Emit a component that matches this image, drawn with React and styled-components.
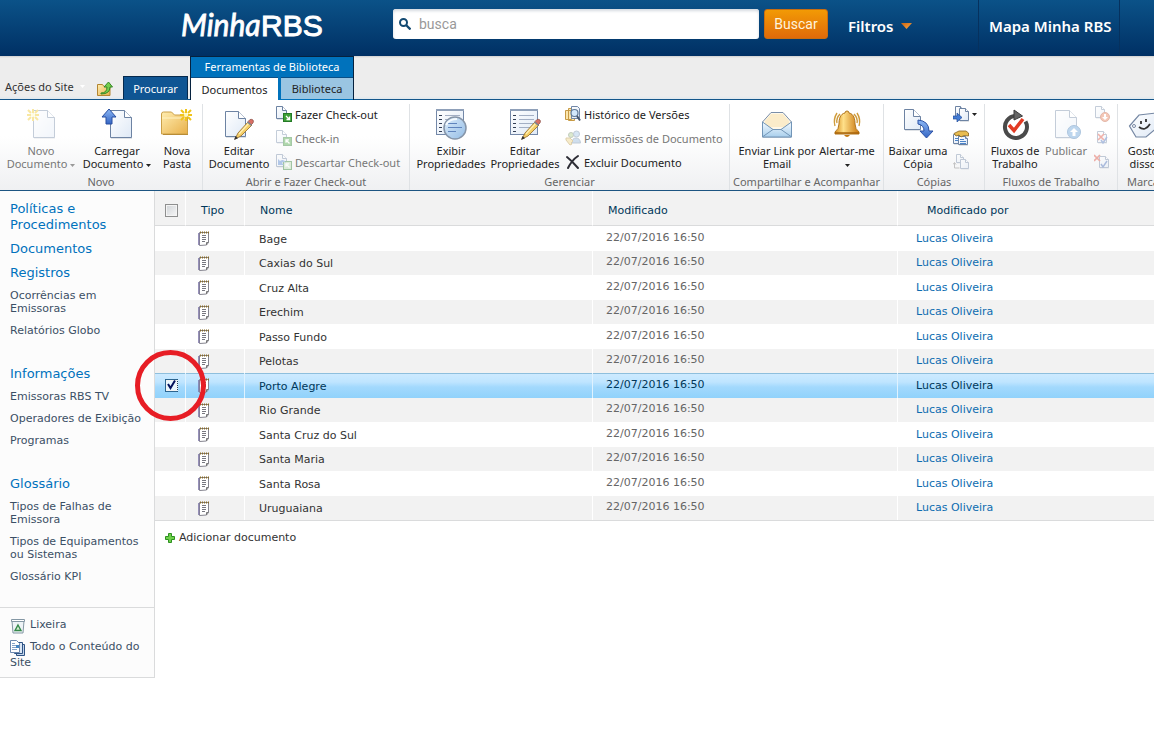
import React from "react";
import styled, { createGlobalStyle, css } from "styled-components";

const GlobalStyle = createGlobalStyle`
  * { box-sizing: border-box; }
  body { margin: 0; background: #fff; font-family: "DejaVu Sans", Verdana, sans-serif; font-size: 11px; overflow-x: hidden; }
  a { color: inherit; text-decoration: none; }
  button { font: inherit; color: inherit; border: 0; background: none; padding: 0; margin: 0; cursor: pointer; }
  svg { display: block; flex: none; }
`;

const uiFont = css`font-family: "Noto Sans", "Open Sans", sans-serif;`;

/* ---------- top bar ---------- */
const TopBar = styled.header`
  ${uiFont}
  display: flex;
  height: 56px;
  padding-left: 178px;
  overflow: hidden;
  background: linear-gradient(#0b5288, #003064);
`;
const LogoLink = styled.a`
  width: 215px;
  flex: none;
`;
const SearchForm = styled.form`
  display: flex;
  gap: 5px;
  flex: 0 1 435px;
  min-width: 200px;
  padding-top: 9px;
`;
const SearchBox = styled.label`
  display: flex;
  align-items: center;
  gap: 8px;
  flex: 1;
  min-width: 0;
  height: 30px;
  padding-left: 6px;
  border-radius: 3px;
  background: #fff;
  box-shadow: inset 0 2px 3px #d5dae0;
`;
const SearchInput = styled.input`
  flex: 1;
  min-width: 0;
  border: 0;
  outline: 0;
  padding: 0;
  background: none;
  font-family: Roboto, sans-serif;
  font-size: 14px;
  color: #555;
  &::placeholder { color: #999; opacity: 1; }
`;
const SearchButton = styled.button`
  width: 64px;
  height: 30px;
  border: 1px solid #c96d10;
  border-radius: 3px;
  background: linear-gradient(#f29a05, #e06a0a);
  color: #fff3dc;
  font-family: Roboto, sans-serif;
  font-size: 14px;
`;
const TopLink = styled.a`
  display: flex;
  align-items: center;
  gap: 7px;
  height: 52px;
  color: #fff;
  font-size: 15px;
  font-weight: 600;
  white-space: nowrap;
`;
const FilterSlot = styled.div`
  flex: none;
  width: 150px;
  padding-left: 20px;
`;
const MapSlot = styled.div`
  flex: none;
  width: 142px;
  padding-left: 10px;
  border-left: 1px solid #06315e;
  border-right: 1px solid #06315e;
`;

/* ---------- tabs ---------- */
const TabBar = styled.nav`
  ${uiFont}
  display: flex;
  align-items: flex-end;
  height: 44px;
  background: linear-gradient(#cfcfcf, #ededed 2px, #ededed 40px, #dfe8ee);
  border-bottom: 1px solid #14568a;
`;
const SiteActions = styled.button`
  display: flex;
  align-items: center;
  gap: 6px;
  height: 25px;
  padding: 0 0 0 5px;
  width: 97px;
  color: #333;
  white-space: nowrap;
`;
const UpButton = styled.button`
  width: 26px;
  height: 20px;
`;
const Tab = styled.button`
  height: 23px;
  border: 1px solid #05294d;
  border-bottom: 0;
  background: #0f5593;
  color: #fff;
  width: 65px;
`;
const ContextGroup = styled.div`
  width: 164px;
  height: 44px;
  margin: 0 0 -1px 2px;
  border: 1px solid #06223f;
  border-bottom: 0;
  background: #0072bc;
`;
const ContextTitle = styled.div`
  height: 20px;
  line-height: 20px;
  text-align: center;
  color: #fff;
`;
const ContextTabs = styled.div`
  display: flex;
  gap: 3px;
`;
const ContextTab = styled.button`
  width: ${(p) => (p.$active ? 87 : 72)}px;
  height: ${(p) => (p.$active ? 23 : 22)}px;
  border-top: 1px solid #0a4f86;
  background: ${(p) => (p.$active ? "#fff" : "#9ac5e2")};
  color: #222;
`;

/* ---------- ribbon ---------- */
const Ribbon = styled.div`
  ${uiFont}
  display: flex;
  height: 91px;
  overflow: hidden;
  background: linear-gradient(#fff 40%, #eff0f2);
  border-bottom: 1px solid #1d5582;
`;
const Group = styled.section`
  display: flex;
  flex-direction: column;
  flex: none;
  width: ${(p) => p.$w}px;
  margin: 4px 0 0;
  border-right: 1px solid #dfe2e5;
`;
const GroupBody = styled.div`
  display: flex;
  height: 70px;
  padding-left: ${(p) => p.$pad || 4}px;
`;
const GroupTitle = styled.div`
  line-height: 15px;
  text-align: center;
  color: #666;
  white-space: nowrap;
`;
const BigButton = styled.button`
  display: flex;
  flex-direction: column;
  align-items: center;
  flex: none;
  width: ${(p) => p.$w}px;
  padding-top: 4px;
  color: ${(p) => (p.disabled ? "#777" : "#222")};
  line-height: 13px;
  white-space: nowrap;
  & > svg { margin-bottom: 4px; opacity: ${(p) => (p.disabled ? 0.4 : 1)}; }
`;
const Caption = styled.span`
  display: flex;
  align-items: center;
  gap: 3px;
  min-height: 13px;
  & > svg { margin-top: 4px; }
`;
const SmallColumn = styled.div`
  display: flex;
  flex-direction: column;
  padding-left: ${(p) => p.$pad || 4}px;
`;
const SmallButton = styled.button`
  display: flex;
  align-items: center;
  gap: 3px;
  flex: none;
  height: 24px;
  padding-bottom: 4px;
  color: ${(p) => (p.disabled ? "#777" : "#222")};
  white-space: nowrap;
  & > svg:first-child { opacity: ${(p) => (p.disabled ? 0.4 : 1)}; }
`;

/* ---------- body ---------- */
const Body = styled.div`
  display: flex;
  align-items: flex-start;
`;
const Sidebar = styled.aside`
  flex: none;
  width: 155px;
  padding-top: 10px;
  background: #fcfcfc;
  border-right: 1px solid #dadbdc;
  border-bottom: 1px solid #dadbdc;
  color: #3b4f65;
`;
const NavSection = styled.nav`
  padding: 0 4px 0 10px;
  margin-bottom: ${(p) => (p.$last ? 15 : 20)}px;
  display: flow-root;
`;
const NavHeading = styled.a`
  display: block;
  margin-bottom: 8px;
  font-size: 13px;
  line-height: 16px;
  color: #0072bc;
`;
const NavItem = styled.a`
  display: block;
  margin-bottom: 9px;
  line-height: 13px;
`;
const SideFooter = styled.div`
  padding: 9px 4px 6px 10px;
  border-top: 1px solid #dadbdc;
`;
const FooterItem = styled.a`
  display: block;
  margin-bottom: 6px;
  line-height: 16px;
  & > svg { display: inline-block; vertical-align: -3px; margin: -3px 4px -3px 0; }
  &:last-child { margin-bottom: 0; }
`;
const Main = styled.main`
  flex: 1;
  min-width: 0;
`;
const ListTable = styled.table`
  width: 100%;
  table-layout: fixed;
  border-collapse: separate;
  border-spacing: 0;
  border-bottom: 1px solid #dadbdc;
  color: #333;
`;
const HeadCell = styled.th`
  width: ${(p) => (p.$w ? p.$w + "px" : "auto")};
  height: 35px;
  padding: 4px 0 0 ${(p) => p.$pad}px;
  background: #f2f2f2;
  border-right: 1px solid #fff;
  border-bottom: 1px solid #dadbdc;
  font-weight: normal;
  text-align: left;
  color: #003759;
  &:last-child { border-right: 0; }
`;
const Row = styled.tr`
  height: 25px;
  background: #fff;
  &:nth-child(even) { height: 24px; background: #f2f2f2; }
  ${(p) => p.$selected && css`
    && { background: linear-gradient(#8ebfdd 1px, #cdeaff 1px, #bfe5ff 9px, #a3d9fd 14px, #91d2fb); color: #003759; }
  `}
`;
const Cell = styled.td`
  position: relative;
  padding: ${(p) => (p.$lowered ? 2 : 0)}px 0 ${(p) => (p.$raised ? 2 : 0)}px ${(p) => p.$pad}px;
  border-right: 1px solid ${(p) => (p.$selected ? "#dff2ff" : "#fff")};
  line-height: 16px;
  color: ${(p) => (p.$raised && !p.$selected ? "#666" : "inherit")};
  &:last-child { border-right: 0; }
`;
const UserLink = styled.a`
  color: ${(p) => (p.$selected ? "#003759" : "#0d6cb0")};
`;
const Check = styled.input`
  appearance: none;
  display: block;
  width: 13px;
  height: 13px;
  margin: 0;
  border: 1px solid #8e8f8f;
  background: linear-gradient(135deg, #cfd3d6, #f7f7f7);
  box-shadow: inset 0 0 0 1px #f4f4f4;
  opacity: ${(p) => (p.$hidden ? 0 : 1)};
  ${(p) => p.$marked && css`
    border: 1px solid #2c6590;
    border-right: 1px dotted #24425a;
    background: #e9f7ff;
  `}
`;
const TickMark = styled.svg`
  position: absolute;
  left: 10px;
  top: 5px;
  pointer-events: none;
`;
const Ring = styled.span`
  position: absolute;
  z-index: 2;
  left: -20px;
  top: -23px;
  width: 71px;
  height: 71px;
  border: 5px solid #e71d25;
  border-radius: 50%;
  pointer-events: none;
`;
const AddLink = styled.a`
  display: inline-flex;
  align-items: center;
  gap: 4px;
  padding: 9px 10px;
  line-height: 16px;
  color: #333;
`;

/* ---------- icons ---------- */
const Svg = ({ s = 32, children, ...rest }) => (
  <svg width={s} height={s} viewBox={`0 0 ${s} ${s}`} fill="none" aria-hidden="true" {...rest}>{children}</svg>
);
const HiddenSvg = styled.svg`
  position: absolute;
`;
const Defs = () => (
  <HiddenSvg width="0" height="0" aria-hidden="true">
    <defs>
      <linearGradient id="paper" x1="0" y1="0" x2="1" y2="1"><stop stopColor="#fff" /><stop offset="1" stopColor="#dfe9f6" /></linearGradient>
      <linearGradient id="gold" x1="0" y1="0" x2="1" y2="1"><stop stopColor="#ffedb0" /><stop offset="1" stopColor="#e8b04a" /></linearGradient>
      <linearGradient id="bell" x1="0" x2="1" y1="0" y2="0"><stop stopColor="#d58b1b" /><stop offset=".35" stopColor="#ffe08a" /><stop offset="1" stopColor="#c8750d" /></linearGradient>
      <linearGradient id="blue" x1="0" y1="0" x2="0" y2="1"><stop stopColor="#8db8f5" /><stop offset="1" stopColor="#3465c4" /></linearGradient>
      <linearGradient id="sky" x1="0" y1="0" x2="0" y2="1"><stop stopColor="#f4faff" /><stop offset="1" stopColor="#a9cfec" /></linearGradient>
      <linearGradient id="lens" x1="0" y1="0" x2="1" y2="1"><stop stopColor="#dcecfa" /><stop offset="1" stopColor="#94bde6" /></linearGradient>
      <linearGradient id="orange" x1="0" y1="0" x2="1" y2="1"><stop stopColor="#c96310" /><stop offset="1" stopColor="#ffab45" /></linearGradient>
    </defs>
  </HiddenSvg>
);
const Sheet = ({ x = 8, y = 2, w = 21, h = 28, f = 7 }) => (
  <g>
    <path d={`M${x + 1} ${y + 1}h${w - f}l${f} ${f}v${h - f}h${-w}z`} fill="#c9ced6" opacity=".6" />
    <path d={`M${x + 0.5} ${y + 0.5}h${w - f}l${f} ${f}v${h - f - 1}h${-w}z`} fill="url(#paper)" stroke="#6d83a3" />
    <path d={`M${x + w - f + 0.5} ${y + 0.5}v${f}h${f}`} fill="#fff" stroke="#6d83a3" />
  </g>
);
const Burst = ({ x, y }) => (
  <g transform={`translate(${x} ${y})`}>
    <path d="M0-6v4M0 2v4M-6 0h4M2 0h4M-5-5l3 3M5-5L2-2M-5 5l3-3M5 5L2 2" stroke="#f0c419" strokeWidth="2" />
    <circle r="2" fill="#fff8b8" />
  </g>
);
const Pencil = ({ x, y }) => (
  <g transform={`translate(${x} ${y})`}>
    <path d="M1 20l3-6L14 3l4 3L7 17z" fill="#f5cf67" stroke="#9c7434" strokeWidth=".9" />
    <path d="M5 15L15 4" stroke="#fff0b5" strokeWidth="1.200" />
    <path d="M14 2.500l2-2q2-.5 3 .5t0 3l-2 2z" fill="#d96f65" stroke="#8a5148" strokeWidth=".7" />
    <path d="M13.500 3l4 3.500" stroke="#7c8794" strokeWidth="1.500" />
    <path d="M0 21l1.500-4 2.500 2.200z" fill="#333" />
  </g>
);
const FormSheet = () => (
  <g>
    <rect x="1.500" y="1.500" width="27" height="25" fill="url(#paper)" stroke="#7488a8" />
    <path d="M1 2h28" stroke="#8fa0b9" strokeWidth="2" />
    <path d="M4 7.500h3M4 11.500h3M4 15.500h3M4 19.500h3M4 23.500h3" stroke="#333f55" />
    <path d="M10 7.500h15M10 11.500h15M10 15.500h15M10 19.500h15" stroke="#a3afc4" />
  </g>
);
const NewDoc = () => <Svg><Sheet x={8} /><Burst x={8} y={7} /></Svg>;
const Upload = () => (
  <Svg><Sheet x={9} /><path d="M8 1l7 8h-4v7H5V9H1z" fill="url(#blue)" stroke="#294fa0" /></Svg>
);
const NewFolder = () => (
  <Svg>
    <path d="M.5 26V6q0-2 2-2h8l3 3h11q2 0 2 2v17z" fill="url(#gold)" stroke="#cba048" />
    <path d="M1 10h25" stroke="#fff3c4" /><path d="M2 26.500h25" stroke="#b88c37" />
    <Burst x={25} y={7} />
  </Svg>
);
const EditDoc = () => <Svg><Sheet x={2} y={3} w={20} h={26} /><Pencil x={11} y={11} /></Svg>;
const ViewProps = () => (
  <Svg><FormSheet /><circle cx="20" cy="20" r="11" fill="url(#lens)" stroke="#8695a8" strokeWidth="1.500" />
    <path d="M12 15.500h10M13 19.500h14M13 23.500h8" stroke="#5f84bd" /><path d="M11 17q3-6 11-6" stroke="#f4faff" strokeWidth="2" /></Svg>
);
const EditProps = () => <Svg><FormSheet /><Pencil x={12} y={11} /></Svg>;
const Mail = () => (
  <Svg>
    <path d="M1.500 14L10 4.500h12L30.500 14v15h-29z" fill="#fff8e8" stroke="#7a8ea8" />
    <path d="M4 13L10 6h12l6 7v6H4z" fill="#fbecca" />
    <path d="M1.500 14L12 21.500h8L30.500 14v15h-29z" fill="url(#sky)" stroke="#7295b7" />
    <path d="M2 28.500l10-7M30 28.500l-10-7" stroke="#7295b7" />
  </Svg>
);
const Bell = () => (
  <Svg>
    <path d="M6 5q-4 6-2 13M9 6q-4 4-3 9M26 5q4 6 2 13M23 6q4 4 3 9" stroke="#cf9c3c" strokeWidth="1.400" />
    <path d="M16 3q2 0 2 2c5 1 6 6 6 11q0 5 4 8v2H4v-2q4-3 4-8c0-5 1-10 6-11q0-2 2-2z" fill="url(#bell)" stroke="#b1751a" />
    <path d="M4 25h24" stroke="#a9650c" strokeWidth="1.500" /><path d="M13 27q3 4 6 0z" fill="#c5780e" />
  </Svg>
);
const Download = () => (
  <Svg><Sheet x={2} y={1} w={16} h={21} /><path d="M16 12q11 1 11 11h4l-6.500 7L18 23h4q0-6-6-7z" fill="url(#blue)" stroke="#2b51a5" /></Svg>
);
const Workflow = () => (
  <Svg>
    <path d="M26.500 13.500A11 11 0 1 1 16 8" stroke="#4a4a4a" strokeWidth="4" />
    <path d="M15 2l8.500 6-8.500 4V9.500z" fill="#666" stroke="#3b3b3b" />
    <path d="M10 17l5 5.500L24 11" stroke="#e23b24" strokeWidth="3.500" />
  </Svg>
);
const Publish = () => (
  <Svg><Sheet x={5} y={2} /><circle cx="24" cy="24" r="6.500" fill="#5c9bd6" stroke="#3470ad" /><path d="M24 20l4 4h-2.500v4h-3v-4H20z" fill="#fff" /></Svg>
);
const Tag = () => (
  <Svg>
    <path d="M2.500 18L12 7l17-2 2 14-12 10H9z" fill="url(#paper)" stroke="#7587a3" strokeWidth="1.200" />
    <path d="M14 13v3M19 11v3M12 19q6 5 11-3" stroke="#333" strokeWidth="1.800" /><circle cx="7" cy="18" r="1.500" fill="#fff" stroke="#7587a3" />
  </Svg>
);
const CheckIcon = ({ kind }) => (
  <Svg s={16}>
    <Sheet x={0} y={0} w={10} h={13} f={4} />
    <rect x="7.500" y="7.500" width="8" height="8" fill={kind === "undo" ? "#b9dcae" : "#3d9f36"} stroke="#247a26" />
    <path d={kind === "out" ? "M10 10l3.500 3.500M10.500 13.500h3v-3" : "M13.500 13.500L10 10M13 9.800h-3v3"} stroke="#fff" strokeWidth="1.300" />
    {kind === "undo" && <path d="M2 11V5l2 2q4-3 6 2-3-2-4 0l2 2z" fill="#4a7fd0" />}
  </Svg>
);
const History = () => (
  <Svg s={16}>
    <path d="M.5 4.500h6v9h-6zM3.500 2.500h6v12h-6z" fill="#fbe6ad" stroke="#c79a45" />
    <path d="M6.500.5h6l2 2v10h-8z" fill="url(#paper)" stroke="#7187a7" />
    <circle cx="9.500" cy="7" r="3.500" fill="#d3e8fb" stroke="#5f7896" strokeWidth="1.200" /><path d="M12 10l3 4.500" stroke="#46566c" strokeWidth="2" />
  </Svg>
);
const Permissions = () => (
  <Svg s={16}>
    <circle cx="6" cy="5" r="2.500" fill="#a9c985" stroke="#6c8260" /><circle cx="11.500" cy="4" r="3" fill="#9ec1e5" stroke="#66819d" />
    <path d="M7 13q0-5 4-5t4.500 5z" fill="#8cb2d8" stroke="#66819d" /><path d="M1 8h4l3 3-2 2 1 1-2 1-4-5z" fill="#eed078" stroke="#ae8a35" />
  </Svg>
);
const Delete = () => (
  <Svg s={16}><path d="M2 3q5 4 11 11M13 2Q7 6 3 14" stroke="#2d2d35" strokeWidth="2" strokeLinecap="round" /></Svg>
);
const SendTo = () => (
  <Svg s={16}><Sheet x={2} y={0} w={8} h={13} f={3} /><Sheet x={6} y={2} w={9} h={13} f={3} /><path d="M0 10h4V7l5 4.500L4 16v-3H0z" fill="#427bd4" stroke="#244f9c" strokeWidth=".7" /></Svg>
);
const Manage = () => (
  <Svg s={16}><Sheet x={0} y={4} w={7} h={10} f={2} /><Sheet x={5} y={6} w={9} h={9} f={2} /><path d="M7 9.500h4M7 11.500h6M7 13.500h6M2 8.500h3M2 10.500h3" stroke="#4b83c9" />
    <path d="M1 3.500L6 1h7l2.500 2v3L11 5.500 8 7 6 5 3 6z" fill="#e8bc50" stroke="#87631e" strokeWidth=".8" /></Svg>
);
const CopyTo = () => (
  <Svg s={16}><Sheet x={3} y={0} w={7} h={9} f={3} /><Sheet x={7} y={5} w={8} h={10} f={3} /><path d="M1.500 9v5h5M0 10.500l1.500-2 1.500 2" stroke="#777" /></Svg>
);
const Unpublish = () => (
  <Svg s={16}><Sheet x={1} y={0} w={9} h={12} f={3} /><circle cx="11" cy="11" r="4.500" fill="#e5774e" stroke="#bb4e2c" /><path d="M11 14l3-3h-2V8h-2v3H8z" fill="#fff" /></Svg>
);
const ApproveReject = ({ cancel }) => (
  <Svg s={16}><Sheet x={cancel ? 5 : 3} y={cancel ? 2 : 1} w={9} h={12} f={3} />
    <path d={cancel ? "M0 1l6 6M6 1L0 7" : "M4 4l6 6M10 4l-6 6"} stroke="#dc402e" strokeWidth="1.700" /><path d="M7 10l2 3 4-6" stroke="#3b64b5" strokeWidth="1.500" /></Svg>
);
const UpFolder = () => (
  <Svg s={16}>
    <path d="M.5 14.500v-11h5l1.500 2h6v9z" fill="url(#gold)" stroke="#b38530" />
    <path d="M4 12q6 0 6-6H7l4.500-5L15.500 6H13q0 7-9 7z" fill="#75cf4c" stroke="#348724" />
  </Svg>
);
const Notebook = () => (
  <svg width="12" height="15" viewBox="0 0 12 15" fill="none" aria-hidden="true">
    <path d="M1.500 1.500h9v10l-2 2.500-7 .5z" fill="#fff" stroke="#85848f" />
    <path d="M.8 2v12" stroke="#7d76a8" strokeWidth="1.200" />
    <path d="M2 1.500h9" stroke="#8a6c25" strokeWidth="2" strokeDasharray="1 1" />
    <path d="M4 4.500h4M4 6.500h4M4 8.500h4M4 10.500h3" stroke="#77777f" /><path d="M8.500 14v-2.500h2" stroke="#777" />
  </svg>
);
const Bin = () => (
  <Svg s={16}>
    <path d="M2 3l1 12h10l1-12z" fill="#eef3f6" stroke="#8497a4" /><path d="M1.500 1.500h13v2h-13z" fill="#fff" stroke="#8497a4" />
    <path d="M8 7l3 5.500H5z" fill="#d4ecd0" stroke="#35894a" strokeWidth="1.400" />
  </Svg>
);
const AllContent = () => (
  <Svg s={16}>
    <path d="M6.500 4.500h8v11h-8z" fill="#c3d4ea" stroke="#2f5485" /><path d="M4.500 2.500h8v11h-8z" fill="#dbe7f5" stroke="#2f5485" />
    <path d="M.5.500h6l3 3v9h-9z" fill="#fff" stroke="#6c88ae" /><path d="M2 3.500h3M2 5.500h5M2 7.500h4M2 9.500h5" stroke="#86a3c8" /><path d="M6 5h3v3H6z" fill="#4686c4" />
  </Svg>
);
const Plus = () => (
  <svg width="10" height="10" viewBox="0 0 10 10" aria-hidden="true"><path d="M3.500.5h3v3h3v3h-3v3h-3v-3h-3v-3h3z" fill="#6fd04a" stroke="#2d9021" /></svg>
);
const Caret = ({ color = "#222" }) => (
  <svg width="5" height="3" viewBox="0 0 5 3" aria-hidden="true"><path d="M0 0h5L2.500 3z" fill={color} /></svg>
);
const Magnifier = () => (
  <svg width="12" height="12" viewBox="0 0 12 12" fill="none" aria-hidden="true"><circle cx="4.500" cy="4.500" r="3.500" stroke="#134a72" strokeWidth="2" /><path d="M7 7l4.500 4.500" stroke="#134a72" strokeWidth="2.300" /></svg>
);
const Logo = () => (
  <svg width="150" height="56" viewBox="0 0 150 56" role="img" aria-label="Minha RBS">
    <text x="3" y="36" fill="#fff" stroke="#fff" strokeWidth=".8" fontFamily="Lato, sans-serif" fontStyle="italic" fontSize="30">Minha</text>
    <text x="83" y="36" fill="#fff" stroke="#fff" strokeWidth="1" fontFamily="'Liberation Sans', sans-serif" fontSize="30">RBS</text>
  </svg>
);

/* ---------- ribbon parts ---------- */
const Big = ({ icon, w, lines, caret, disabled }) => (
  <BigButton type="button" $w={w} disabled={disabled}>
    {icon}
    {lines.map((line, i) => (
      <Caption key={i}>
        {line}
        {caret && i === lines.length - 1 && <Caret color={disabled ? "#999" : "#222"} />}
      </Caption>
    ))}
  </BigButton>
);
const Small = ({ icon, label, hint, caret, disabled }) => (
  <SmallButton type="button" disabled={disabled} aria-label={hint}>
    {icon}{label}{caret && <Caret />}
  </SmallButton>
);

const places = ["Bage", "Caxias do Sul", "Cruz Alta", "Erechim", "Passo Fundo", "Pelotas", "Porto Alegre", "Rio Grande", "Santa Cruz do Sul", "Santa Maria", "Santa Rosa", "Uruguaiana"];
const selectedPlace = "Porto Alegre";

export default function App() {
  return (
    <>
      <GlobalStyle />
      <Defs />
      <TopBar>
        <LogoLink href="#"><Logo /></LogoLink>
        <SearchForm onSubmit={(e) => e.preventDefault()}>
          <SearchBox>
            <Magnifier />
            <SearchInput type="text" placeholder="busca" aria-label="busca" />
          </SearchBox>
          <SearchButton type="submit">Buscar</SearchButton>
        </SearchForm>
        <FilterSlot>
          <TopLink href="#">
            Filtros
            <svg width="11" height="6" viewBox="0 0 11 6" aria-hidden="true"><path d="M0 0h11L5.500 6z" fill="url(#orange)" /></svg>
          </TopLink>
        </FilterSlot>
        <MapSlot><TopLink href="#">Mapa Minha RBS</TopLink></MapSlot>
      </TopBar>

      <TabBar>
        <SiteActions type="button">Ações do Site<Caret color="#fff" /></SiteActions>
        <UpButton type="button" aria-label="Navegar para cima"><UpFolder /></UpButton>
        <Tab type="button">Procurar</Tab>
        <ContextGroup>
          <ContextTitle>Ferramentas de Biblioteca</ContextTitle>
          <ContextTabs>
            <ContextTab type="button" $active>Documentos</ContextTab>
            <ContextTab type="button">Biblioteca</ContextTab>
          </ContextTabs>
        </ContextGroup>
      </TabBar>

      <Ribbon>
        <Group $w={203}>
          <GroupBody>
            <Big w={74} icon={<NewDoc />} lines={["Novo", "Documento"]} caret disabled />
            <Big w={78} icon={<Upload />} lines={["Carregar", "Documento"]} caret />
            <Big w={42} icon={<NewFolder />} lines={["Nova", "Pasta"]} />
          </GroupBody>
          <GroupTitle>Novo</GroupTitle>
        </Group>
        <Group $w={207}>
          <GroupBody>
            <Big w={64} icon={<EditDoc />} lines={["Editar", "Documento"]} />
            <SmallColumn $pad={5}>
              <Small icon={<CheckIcon kind="out" />} label="Fazer Check-out" />
              <Small icon={<CheckIcon kind="in" />} label="Check-in" disabled />
              <Small icon={<CheckIcon kind="undo" />} label="Descartar Check-out" disabled />
            </SmallColumn>
          </GroupBody>
          <GroupTitle>Abrir e Fazer Check-out</GroupTitle>
        </Group>
        <Group $w={320}>
          <GroupBody>
            <Big w={74} icon={<ViewProps />} lines={["Exibir", "Propriedades"]} />
            <Big w={74} icon={<EditProps />} lines={["Editar", "Propriedades"]} />
            <SmallColumn $pad={3}>
              <Small icon={<History />} label="Histórico de Versões" />
              <Small icon={<Permissions />} label="Permissões de Documento" disabled />
              <Small icon={<Delete />} label="Excluir Documento" />
            </SmallColumn>
          </GroupBody>
          <GroupTitle>Gerenciar</GroupTitle>
        </Group>
        <Group $w={154}>
          <GroupBody $pad={6}>
            <Big w={82} icon={<Mail />} lines={["Enviar Link por", "Email"]} />
            <Big w={58} icon={<Bell />} lines={["Alertar-me", ""]} caret />
          </GroupBody>
          <GroupTitle>Compartilhar e Acompanhar</GroupTitle>
        </Group>
        <Group $w={101}>
          <GroupBody>
            <Big w={60} icon={<Download />} lines={["Baixar uma", "Cópia"]} />
            <SmallColumn $pad={5}>
              <Small icon={<SendTo />} hint="Enviar para" caret />
              <Small icon={<Manage />} hint="Gerenciar cópias" />
              <Small icon={<CopyTo />} hint="Ir para origem" disabled />
            </SmallColumn>
          </GroupBody>
          <GroupTitle>Cópias</GroupTitle>
        </Group>
        <Group $w={133}>
          <GroupBody>
            <Big w={52} icon={<Workflow />} lines={["Fluxos de", "Trabalho"]} />
            <Big w={50} icon={<Publish />} lines={["Publicar"]} disabled />
            <SmallColumn $pad={3}>
              <Small icon={<Unpublish />} hint="Cancelar publicação" disabled />
              <Small icon={<ApproveReject />} hint="Aprovar ou rejeitar" disabled />
              <Small icon={<ApproveReject cancel />} hint="Cancelar aprovação" disabled />
            </SmallColumn>
          </GroupBody>
          <GroupTitle>Fluxos de Trabalho</GroupTitle>
        </Group>
        <Group $w={122}>
          <GroupBody>
            <Big w={42} icon={<Tag />} lines={["Gosto", "disso"]} />
          </GroupBody>
          <GroupTitle>Marcas e Anotações</GroupTitle>
        </Group>
      </Ribbon>

      <Body>
        <Sidebar>
          <NavSection>
            <NavHeading href="#">Políticas e Procedimentos</NavHeading>
            <NavHeading href="#">Documentos</NavHeading>
            <NavHeading href="#">Registros</NavHeading>
            <NavItem href="#">Ocorrências em Emissoras</NavItem>
            <NavItem href="#">Relatórios Globo</NavItem>
          </NavSection>
          <NavSection>
            <NavHeading href="#">Informações</NavHeading>
            <NavItem href="#">Emissoras RBS TV</NavItem>
            <NavItem href="#">Operadores de Exibição</NavItem>
            <NavItem href="#">Programas</NavItem>
          </NavSection>
          <NavSection $last>
            <NavHeading href="#">Glossário</NavHeading>
            <NavItem href="#">Tipos de Falhas de Emissora</NavItem>
            <NavItem href="#">Tipos de Equipamentos ou Sistemas</NavItem>
            <NavItem href="#">Glossário KPI</NavItem>
          </NavSection>
          <SideFooter>
            <FooterItem href="#"><Bin />Lixeira</FooterItem>
            <FooterItem href="#"><AllContent />Todo o Conteúdo do Site</FooterItem>
          </SideFooter>
        </Sidebar>

        <Main>
          <ListTable>
            <thead>
              <tr>
                <HeadCell $w={31} $pad={10}><Check type="checkbox" aria-label="Selecionar tudo" /></HeadCell>
                <HeadCell $w={59} $pad={15}>Tipo</HeadCell>
                <HeadCell $w={348} $pad={15}>Nome</HeadCell>
                <HeadCell $w={305} $pad={15}>Modificado</HeadCell>
                <HeadCell $pad={29}>Modificado por</HeadCell>
              </tr>
            </thead>
            <tbody>
              {places.map((name) => {
                const selected = name === selectedPlace;
                return (
                  <Row key={name} $selected={selected}>
                    <Cell $pad={10} $selected={selected}>
                      <Check type="checkbox" aria-label={name} defaultChecked={selected} $marked={selected} $hidden={!selected} />
                      {selected && (
                        <>
                          <TickMark width="13" height="13" viewBox="0 0 13 13" fill="none"><path d="M3 6l2.500 4L10 2.500" stroke="#04115c" strokeWidth="2" /></TickMark>
                          <Ring />
                        </>
                      )}
                    </Cell>
                    <Cell $pad={12} $selected={selected}><Notebook /></Cell>
                    <Cell $pad={14} $selected={selected} $lowered>{name}</Cell>
                    <Cell $pad={13} $selected={selected} $raised>22/07/2016 16:50</Cell>
                    <Cell $pad={18} $selected={selected}><UserLink href="#" $selected={selected}>Lucas Oliveira</UserLink></Cell>
                  </Row>
                );
              })}
            </tbody>
          </ListTable>
          <AddLink href="#"><Plus />Adicionar documento</AddLink>
        </Main>
      </Body>
    </>
  );
}
